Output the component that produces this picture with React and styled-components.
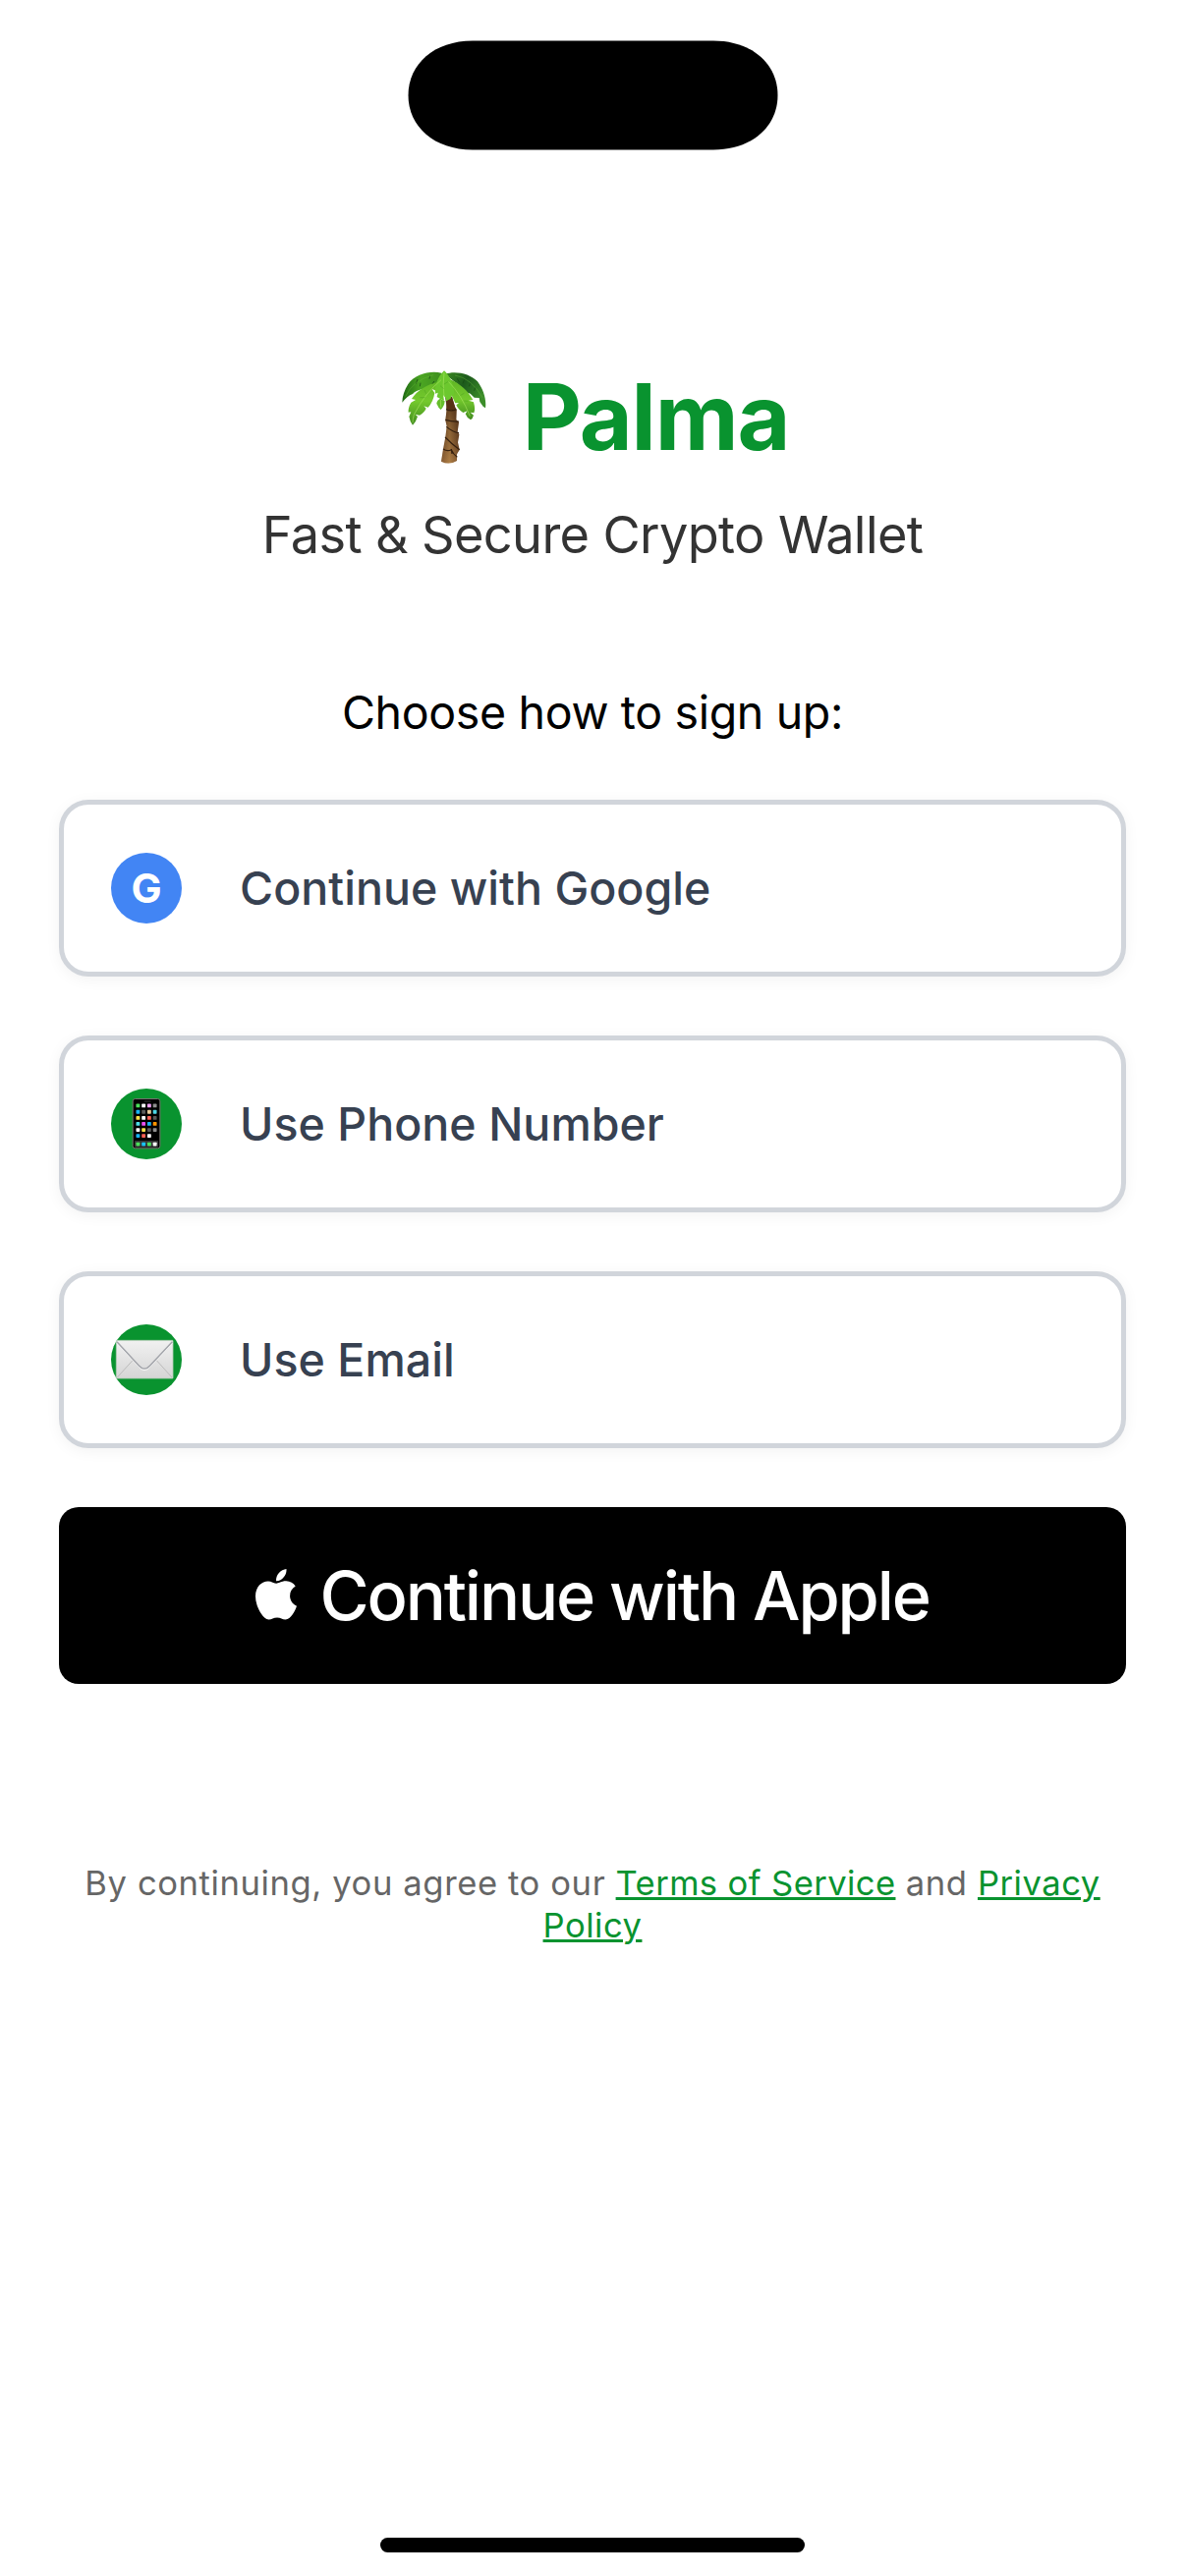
import React from "react";
import styled, { createGlobalStyle } from "styled-components";

const GlobalStyle = createGlobalStyle`
  *, *::before, *::after { box-sizing: border-box; }
  body {
    margin: 0;
    background: #fff;
    font-family: Inter, "Liberation Sans", sans-serif;
  }
`;

const Screen = styled.main`
  display: flex;
  flex-direction: column;
  align-items: center;
  width: 1206px;
  height: 2622px;
  padding: 41px 60px 24px;
  background: #fff;
  overflow: hidden;
`;

const Island = styled.svg`
  display: block;
  flex: none;
  width: 377px;
  height: 112px;
`;

const Header = styled.header`
  display: flex;
  flex-direction: column;
  align-items: center;
  margin-top: 213px;
`;

const Brand = styled.div`
  display: flex;
  align-items: center;
  gap: 37px;
  height: 116px;
  padding-left: 6px;
`;

const PalmIcon = styled.svg`
  display: block;
  width: 86px;
  height: 96px;
  margin-top: 2px;
`;

const Title = styled.h1`
  margin: 0;
  font-size: 93px;
  line-height: 116px;
  font-weight: 700;
  letter-spacing: -1.1px;
  color: #09932f;
`;

const Tagline = styled.p`
  margin: 30px 0 0;
  font-size: 52.3px;
  line-height: 64px;
  letter-spacing: -0.63px;
  color: #333;
`;

const Prompt = styled.p`
  margin: 120px 0 0;
  font-size: 46.5px;
  line-height: 58px;
  letter-spacing: -0.342px;
  color: #000;
`;

const Options = styled.div`
  display: flex;
  flex-direction: column;
  gap: 60px;
  width: 100%;
  margin-top: 60px;
`;

const OptionButton = styled.button`
  display: flex;
  align-items: center;
  gap: 59px;
  width: 100%;
  height: 180px;
  padding: 0 48px;
  border: 5px solid #d1d5db;
  border-radius: 30px;
  background: #fff;
  box-shadow: 0 3px 15px rgba(0, 0, 0, 0.05);
  font-family: inherit;
  font-size: 46.5px;
  font-weight: 500;
  letter-spacing: 0.04px;
  color: #374151;
  text-align: left;
`;

const Badge = styled.span`
  display: flex;
  align-items: center;
  justify-content: center;
  flex: none;
  width: 72px;
  height: 72px;
  border-radius: 50%;
  background: ${({ $color }) => $color};
  color: #fff;
  font-size: 41.5px;
  line-height: 72px;
  font-weight: 700;
`;

const BadgeIcon = styled.svg`
  display: block;
  width: 72px;
  height: 72px;
`;

const AppleButton = styled.button`
  display: flex;
  align-items: center;
  justify-content: center;
  gap: 23.4px;
  width: 100%;
  height: 180px;
  padding: 0;
  border: 0;
  border-radius: 20px;
  background: #000;
  color: #fff;
  font-family: inherit;
  font-size: 68.4px;
  font-weight: 500;
  letter-spacing: -2.13px;
`;

const AppleLogo = styled.svg`
  display: block;
  width: 42px;
  height: 51.5px;
  margin-bottom: 2px;
`;

const Legal = styled.p`
  width: 1080px;
  margin: 181px 0 0;
  font-size: 34.6px;
  line-height: 43px;
  letter-spacing: 0.6px;
  text-align: center;
  color: #666;
`;

const LegalLink = styled.a`
  color: #09932f;
  letter-spacing: ${({ $tracking }) => $tracking};
  text-decoration: underline;
  text-decoration-thickness: 3px;
  text-underline-offset: 2px;
`;

const HomeIndicator = styled.div`
  width: 432px;
  height: 15px;
  margin-top: auto;
  border-radius: 8px;
  background: #000;
`;

function Palm() {
  return (
    <PalmIcon viewBox="27 36 258 288" aria-hidden="true">
      <defs>
        <linearGradient id="leafL" x1="0" y1="0" x2="1" y2="0">
          <stop offset="0" stopColor="#1f6a14" />
          <stop offset="0.45" stopColor="#4ba522" />
          <stop offset="1" stopColor="#3c8c1e" />
        </linearGradient>
        <linearGradient id="leafR" x1="0" y1="0" x2="1" y2="0.5">
          <stop offset="0" stopColor="#3b8a20" />
          <stop offset="0.5" stopColor="#1d5a1c" />
          <stop offset="1" stopColor="#3c8d2a" />
        </linearGradient>
        <linearGradient id="frond" x1="0" y1="0" x2="0" y2="1">
          <stop offset="0" stopColor="#5fb425" />
          <stop offset="0.5" stopColor="#74c92d" />
          <stop offset="1" stopColor="#418b20" />
        </linearGradient>
        <linearGradient id="bark" x1="0" y1="0" x2="1" y2="0">
          <stop offset="0" stopColor="#6b4526" />
          <stop offset="0.45" stopColor="#a0743f" />
          <stop offset="1" stopColor="#5f3c20" />
        </linearGradient>
        <linearGradient id="barkShade" x1="0" y1="0" x2="0" y2="1">
          <stop offset="0" stopColor="#3c210f" stopOpacity="0.75" />
          <stop offset="0.5" stopColor="#3c210f" stopOpacity="0.15" />
          <stop offset="1" stopColor="#d49a57" stopOpacity="0.3" />
        </linearGradient>
      </defs>
      <path d="M160 118L180 116L190 150L194 156L193 187L201 194L197 224L202 232L198 256L203 278L195 292L195 312Q171 326 147 314L153 277L160 239L164 207L160 188L164 154Z" fill="url(#bark)" />
      <path d="M160 118L180 116L190 150L194 156L193 187L201 194L197 224L202 232L198 256L203 278L195 292L195 312Q171 326 147 314L153 277L160 239L164 207L160 188L164 154Z" fill="url(#barkShade)" />
      <path d="M162 155Q178 162 193 155M160 187Q180 193 201 192M163 208Q183 225 201 227M159 240Q178 260 203 278M153 276Q166 285 178 278Q184 292 196 301M178 276L180 291" fill="none" stroke="#35200f" strokeWidth="3.6" />
      <path d="M168 117L163 153Q178 160 191 153Q184 133 178 120L174 130Z" fill="#573015" />
      <path d="M148 44C115 36 68 46 46 78C35 96 28 116 28 134C38 121 48 112 60 108C66 101 77 97 88 94C99 91 113 88 126 82L156 58Z" fill="url(#leafL)" />
      <path d="M158 47C190 36 235 45 258 70C276 94 286 125 282 151L275 146L265 132L263 120L248 119L236 107L219 101L200 80L177 62Z" fill="url(#leafR)" />
      <path d="M133 73C105 79 73 98 57 123L69 126L55 134C48 145 46 157 47 164L55 163L49 177Q52 194 60 203Q70 194 75 177L68 170L81 173Q96 164 101 152L94 145L107 149Q123 132 127 105L119 93L132 98L151 57Z" fill="url(#frond)" />
      <path d="M173 63C205 76 229 99 244 126L231 128L246 133Q252 155 247 166L236 164L246 173Q243 183 237 187Q225 181 221 169L227 160L214 165Q198 155 193 142L201 135L190 136L173 100Z" fill="url(#frond)" />
      <path d="M156 37C136 57 126 83 129 107L137 104L134 117Q145 124 156 128L153 111L161 121L162 130L175 123L180 112L187 109C186 78 171 50 156 37Z" fill="#6cc82e" />
      <path d="M144 122Q134 127 133 137Q138 150 146 156Q157 145 158 130Z" fill="#65bd2b" />
      <path d="M156 42Q151 77 156 118M147 65Q99 104 64 171Q60 184 60 196M169 70Q209 110 235 176M145 126L146 149" fill="none" stroke="#a5e45d" strokeWidth="2.2" opacity="0.85" />
      <path d="M111 62L113 53M82 85L84 74M75 63L70 77M218 64L213 76M232 85L235 76M120 77L126 69M196 61L203 73M248 98L251 88" fill="none" stroke="#164b12" strokeWidth="2.3" />
      <path d="M38 116Q59 67 123 50M189 51Q239 59 273 119" fill="none" stroke="#6ab83a" strokeWidth="2" opacity="0.6" />
      <path d="M155 92L144 83M156 78L169 70M98 119L82 119M101 107L96 96M206 112L217 106M217 129L229 130" stroke="#489922" strokeWidth="1.8" opacity="0.7" />
    </PalmIcon>
  );
}

const APP_ROWS = [
  [106, ["#4be05a", "#fff", "#f0a0f5", "#8e8e8e"]],
  [125, ["#18b4f5", "#5a5a5a", "#e5c99a", "#4bd6e6"]],
  [143.5, ["#ffe14a", "#fff", "#ff6155", "#5a5a5a"]],
  [161.5, ["#4bdce6", "#e950f0", "#18b4f5", "#ff9500"]],
  [180, ["#fff", "#ffe14a", "#5a5a5a", "#8e8e8e"]],
  [198, ["#18b4f5", "#ff6155", "#fff"]],
  [223.5, ["#4be05a", "#18c3f5", "#4be05a", "#fff"]],
];

function Phone() {
  return (
    <BadgeIcon viewBox="39 54 216 216" aria-hidden="true">
      <rect x="105.5" y="85.5" width="83" height="151" rx="7" fill="#000" stroke="#77706f" strokeWidth="3" />
      <rect x="140" y="91" width="21" height="4" rx="2" fill="#252525" />
      <rect x="111" y="213" width="72" height="20" rx="2" fill="#343434" />
      {APP_ROWS.map(([y, colors]) =>
        colors.map((color, i) => (
          <rect key={`${y}-${i}`} x={115.5 + i * 17.2} y={y - 5.5} width="11.5" height="11.5" rx="2" fill={color} />
        ))
      )}
    </BadgeIcon>
  );
}

function Envelope() {
  return (
    <BadgeIcon viewBox="39 54 216 216" aria-hidden="true">
      <defs>
        <linearGradient id="paper" x1="0" y1="0" x2="0" y2="1">
          <stop offset="0" stopColor="#f1f1f1" />
          <stop offset="1" stopColor="#d5d5d5" />
        </linearGradient>
      </defs>
      <rect x="55" y="103" width="173" height="116" rx="1.5" fill="url(#paper)" stroke="#b2cdb6" strokeWidth="2.5" />
      <path d="M58 216L105 164M225 216L178 164" fill="none" stroke="#bcbcbc" strokeWidth="3" />
      <path d="M57 112L124 184Q141 204 158 184L226 112" fill="none" stroke="#f8f8f8" strokeWidth="3" />
      <path d="M57 107L124 180Q141 199 158 180L226 107" fill="none" stroke="#a2a4aa" strokeWidth="4.2" />
    </BadgeIcon>
  );
}

export default function App() {
  return (
    <>
      <GlobalStyle />
      <Screen>
        <Island viewBox="0 0 377 112" aria-hidden="true">
          <path d="M66 0.5H311C350 0.5 376.5 24 376.5 56S350 111.5 311 111.5H66C27 111.5 0.5 88 0.5 56S27 0.5 66 0.5Z" />
        </Island>
        <Header>
          <Brand>
            <Palm />
            <Title>Palma</Title>
          </Brand>
          <Tagline>Fast &amp; Secure Crypto Wallet</Tagline>
        </Header>
        <Prompt>Choose how to sign up:</Prompt>
        <Options>
          <OptionButton>
            <Badge $color="#4285f4">G</Badge>
            Continue with Google
          </OptionButton>
          <OptionButton>
            <Badge $color="#09932f">
              <Phone />
            </Badge>
            Use Phone Number
          </OptionButton>
          <OptionButton>
            <Badge $color="#09932f">
              <Envelope />
            </Badge>
            Use Email
          </OptionButton>
          <AppleButton>
            <AppleLogo viewBox="4 32 376.4 448" preserveAspectRatio="none" fill="currentColor" aria-hidden="true">
              <path d="M318.7 268.7c-.2-36.7 16.4-64.4 50-84.8-18.8-26.9-47.2-41.7-84.7-44.6-35.5-2.8-74.3 20.7-88.5 20.7-15 0-49.4-19.7-76.4-19.7C63.3 141.2 4 184.8 4 273.5q0 39.3 14.4 81.2c12.8 36.7 59 126.7 107.2 125.2 25.2-.6 43-17.9 75.8-17.9 31.8 0 48.3 17.9 76.4 17.9 48.6-.7 90.4-82.5 102.6-119.3-65.2-30.7-61.7-90-61.7-91.9zm-56.6-164.2c27.3-32.4 24.8-61.9 24-72.5-24.1 1.4-52 16.4-67.9 34.9-17.5 19.8-27.8 44.3-25.6 71.9 26.1 2 49.9-11.4 69.5-34.3z" />
            </AppleLogo>
            Continue with Apple
          </AppleButton>
        </Options>
        <Legal>
          By continuing, you agree to our <LegalLink $tracking="0.4px">Terms of Service</LegalLink> and{" "}
          <LegalLink $tracking="0.5px">Privacy Policy</LegalLink>
        </Legal>
        <HomeIndicator />
      </Screen>
    </>
  );
}
